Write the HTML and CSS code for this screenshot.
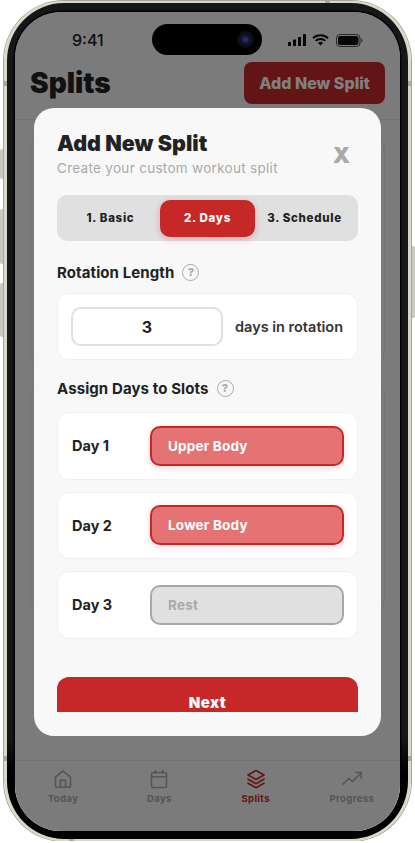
FILE: index.html
```html
<!DOCTYPE html>
<html lang="en">
<head>
<meta charset="UTF-8">
<meta name="viewport" content="width=device-width, initial-scale=1.0">
<title>Add New Split</title>
<link rel="stylesheet" href="styles.css">
</head>
<body>
  <div class="device">
    <span class="side-btn btn-mute"></span>
    <span class="side-btn btn-up"></span>
    <span class="side-btn btn-down"></span>
    <span class="side-btn btn-power"></span>
    <span class="band band-top"></span>
    <span class="band band-bottom"></span>
    <span class="band band-left-a"></span>
    <span class="band band-left-b"></span>
    <span class="band band-right-a"></span>
    <span class="band band-right-b"></span>

    <div class="screen">
      <div class="status-bar">
        <span class="clock">9:41</span>
        <div class="status-icons">
          <svg width="18" height="12" viewBox="0 0 18 12" fill="#0c0c0c">
            <rect x="0" y="8" width="3" height="4" rx="0.6"/>
            <rect x="5" y="5.5" width="3" height="6.5" rx="0.6"/>
            <rect x="10" y="3" width="3" height="9" rx="0.6"/>
            <rect x="15" y="0" width="3" height="12" rx="0.6"/>
          </svg>
          <svg width="17" height="12" viewBox="0 0 17 12" fill="none" stroke="#0c0c0c" stroke-width="2">
            <path d="M1 4.2a10.8 10.8 0 0 1 15 0"/>
            <path d="M3.6 6.9a7 7 0 0 1 9.8 0"/>
            <path d="M8.5 11.6l-2.5-2.6a3.5 3.5 0 0 1 5 0z" fill="#0c0c0c" stroke="none"/>
          </svg>
          <svg class="battery" width="27" height="13" viewBox="0 0 27 13" fill="none">
            <rect x="0.5" y="0.5" width="23.5" height="12" rx="3.5" stroke="#4a4a4a"/>
            <rect x="2" y="2" width="20.5" height="9" rx="2.2" fill="#0c0c0c"/>
            <path d="M25.3 4.6c.8.3 1.2 1 1.2 1.9s-.4 1.6-1.2 1.9z" fill="#4a4a4a"/>
          </svg>
        </div>
      </div>

      <header class="page-header">
        <h1>Splits</h1>
        <button class="add-btn">Add New Split</button>
      </header>

      <main class="page-body">
        <div class="bg-card"></div>
        <div class="bg-card"></div>
      </main>

      <nav class="tab-bar">
        <div class="tab">
          <svg width="20" height="20" viewBox="0 0 20 20" fill="none" stroke="currentColor" stroke-width="1.6" stroke-linejoin="round">
            <path d="M2.5 8.2 10 1.8l7.5 6.4v8.3a1.8 1.8 0 0 1-1.8 1.8H4.3a1.8 1.8 0 0 1-1.8-1.8z"/>
            <path d="M7.4 18.2v-7h5.2v7"/>
          </svg>
          <span>Today</span>
        </div>
        <div class="tab">
          <svg width="20" height="20" viewBox="0 0 20 20" fill="none" stroke="currentColor" stroke-width="1.6">
            <rect x="2.5" y="3.5" width="15" height="15" rx="1.6"/>
            <path d="M2.5 7.8h15M6.5 1v4M13.5 1v4"/>
          </svg>
          <span>Days</span>
        </div>
        <div class="tab tab-active">
          <svg width="20" height="20" viewBox="0 0 20 20" fill="none" stroke="currentColor" stroke-width="1.6" stroke-linejoin="round" stroke-linecap="round">
            <path d="M10 1.5 18 6l-8 4.5L2 6z"/>
            <path d="M2 10.2l8 4.5 8-4.5"/>
            <path d="M2 14.2l8 4.5 8-4.5"/>
          </svg>
          <span>Splits</span>
        </div>
        <div class="tab">
          <svg width="20" height="20" viewBox="0 0 20 20" fill="none" stroke="currentColor" stroke-width="1.6">
            <path d="M0.5 15.5 7 9.5l3.5 3L19 4"/>
            <path d="M13 3.5h6.3v6.3"/>
          </svg>
          <span>Progress</span>
        </div>
      </nav>

      <div class="overlay"></div>

      <div class="island"><span class="camera"></span></div>

      <section class="modal">
        <div class="modal-scroll">
          <div class="modal-head">
            <div>
              <h2>Add New Split</h2>
              <p>Create your custom workout split</p>
            </div>
            <span class="close-x">X</span>
          </div>

          <div class="steps">
            <div class="step">1. Basic</div>
            <div class="step step-active">2. Days</div>
            <div class="step">3. Schedule</div>
          </div>

          <div class="field-label">Rotation Length <span class="help">?</span></div>
          <div class="card rotation-card">
            <div class="number-input">3</div>
            <span class="rotation-text">days in rotation</span>
          </div>

          <div class="field-label assign-label">Assign Days to Slots <span class="help">?</span></div>
          <div class="slots">
            <div class="card slot">
              <span class="slot-name">Day 1</span>
              <div class="picker picker-on">Upper Body</div>
            </div>
            <div class="card slot">
              <span class="slot-name">Day 2</span>
              <div class="picker picker-on">Lower Body</div>
            </div>
            <div class="card slot">
              <span class="slot-name">Day 3</span>
              <div class="picker picker-rest">Rest</div>
            </div>
          </div>

          <button class="next-btn">Next</button>
        </div>
      </section>
    </div>
  </div>
</body>
</html>
```

FILE: styles.css
```css
* {
  box-sizing: border-box;
}

body {
  margin: 0;
  background: #fff;
  font-family: Inter, "Liberation Sans", sans-serif;
  color: #222;
  overflow: hidden;
}

.device {
  position: relative;
  width: 407px;
  height: 840px;
  margin: 1px 0 0 4px;
  padding: 9px 8px 8px;
  border: solid #dad8ca;
  border-width: 2px 3px;
  border-radius: 60px;
  background: linear-gradient(#141818 0 88%, #000 92%);
  box-shadow: 0 0 0 1px #a8a694;
}

.side-btn {
  position: absolute;
  width: 3px;
  background: #c9c8c1;
}

.btn-mute {
  left: -7px;
  top: 146px;
  height: 30px;
  border-radius: 2px 0 0 2px;
}

.btn-up {
  left: -7px;
  top: 206px;
  height: 55px;
  border-radius: 2px 0 0 2px;
}

.btn-down {
  left: -7px;
  top: 280px;
  height: 54px;
  border-radius: 2px 0 0 2px;
}

.btn-power {
  right: -7px;
  top: 243px;
  height: 72px;
  border-radius: 0 2px 2px 0;
}

.band {
  position: absolute;
  background: #a9a795;
}

.band-top {
  top: -3px;
  left: 318px;
  width: 5px;
  height: 3px;
}

.band-bottom {
  bottom: -3px;
  left: 62px;
  width: 5px;
  height: 3px;
}

.band-left-a,
.band-left-b {
  left: -4px;
  width: 4px;
  height: 5px;
}

.band-right-a,
.band-right-b {
  right: -4px;
  width: 4px;
  height: 5px;
}

.band-left-a,
.band-right-a {
  top: 78px;
}

.band-left-b,
.band-right-b {
  top: 753px;
}

.screen {
  position: relative;
  display: flex;
  flex-direction: column;
  height: 819px;
  border-radius: 46px;
  background: #f7f7f7;
  box-shadow: 0 0 0 1.5px #000;
  overflow: hidden;
}

.status-bar {
  display: flex;
  justify-content: space-between;
  align-items: center;
  height: 42px;
  padding: 14px 37px 0 57px;
}

.clock {
  font-size: 16px;
  font-weight: 500;
  color: #1c1c1c;
}

.status-icons {
  display: flex;
  align-items: center;
  gap: 6px;
}

.battery {
  margin-left: 1px;
}

.page-header {
  display: flex;
  justify-content: space-between;
  align-items: flex-start;
  height: 66px;
  padding: 8px 15px 0;
  border-bottom: 1px solid #e6e6e6;
}

.page-header h1 {
  margin: 0;
  font-size: 28px;
  font-weight: 900;
  line-height: 42px;
  color: #222;
}

.add-btn {
  width: 141px;
  height: 42px;
  border: none;
  border-radius: 8px;
  background: #c62828;
  color: #fff;
  font-family: inherit;
  font-size: 16px;
  font-weight: 800;
}

.page-body {
  flex: 1;
  display: flex;
  flex-direction: column;
  gap: 12px;
  padding: 13px 15px;
}

.bg-card {
  height: 235px;
  border: 1px solid #e6e6e6;
  border-radius: 16px;
  background: #f7f7f7;
}

.tab-bar {
  display: flex;
  height: 71px;
  padding-top: 8px;
  border-top: 1px solid #e6e6e6;
  background: #f7f7f7;
}

.tab {
  flex: 1;
  display: flex;
  flex-direction: column;
  align-items: center;
  gap: 4px;
  color: #aaa;
  font-size: 9.5px;
  font-weight: 700;
  letter-spacing: 0.4px;
}

.tab-active {
  color: #c62828;
}

.overlay {
  position: absolute;
  inset: 0;
  background: rgba(0, 0, 0, 0.5);
}

.island {
  position: absolute;
  top: 12px;
  left: 137px;
  width: 110px;
  height: 31px;
  border-radius: 16px;
  background: #000;
}

.camera {
  position: absolute;
  top: 7px;
  right: 8px;
  width: 17px;
  height: 17px;
  border-radius: 50%;
  background: radial-gradient(circle, #2a2a6a 0 12%, #12122a 35%, #0b0b14 70%);
}

.modal {
  position: absolute;
  top: 96px;
  left: 19px;
  width: 347px;
  height: 628px;
  padding: 23px 23px 24px;
  border-radius: 20px;
  background: #f8f8f8;
}

.modal-scroll {
  height: 100%;
  overflow: hidden;
}

.modal-head {
  display: flex;
  justify-content: space-between;
  align-items: center;
}

.modal-head h2 {
  margin: 0;
  font-size: 21.5px;
  font-weight: 900;
  line-height: 25px;
  color: #222;
}

.modal-head p {
  margin: 2px 0 0;
  font-size: 13.5px;
  line-height: 20px;
  letter-spacing: 0.3px;
  color: #aaa;
}

.close-x {
  margin-right: 8px;
  font-size: 22px;
  font-weight: 900;
  color: #aaa;
}

.steps {
  display: flex;
  align-items: center;
  height: 46px;
  margin-top: 17px;
  padding: 4px;
  border-radius: 10px;
  background: #e0e0e0;
}

.step {
  flex: 1;
  display: flex;
  justify-content: center;
  align-items: center;
  height: 37px;
  border-radius: 10px;
  font-size: 11.5px;
  font-weight: 800;
  letter-spacing: 0.7px;
  white-space: nowrap;
  color: #222;
}

.step-active {
  flex: 0 0 95px;
  background: #c62828;
  color: #fff;
  box-shadow: 0 2px 6px rgba(198, 40, 40, 0.3);
}

.field-label {
  display: flex;
  align-items: center;
  gap: 8px;
  margin-top: 21px;
  height: 20px;
  font-size: 15px;
  font-weight: 700;
  letter-spacing: 0.1px;
  color: #222;
}

.assign-label {
  margin-top: 18px;
}

.help {
  display: flex;
  justify-content: center;
  align-items: center;
  width: 17px;
  height: 17px;
  border: 1.5px solid #aaa;
  border-radius: 50%;
  font-size: 11px;
  font-weight: 800;
  color: #aaa;
}

.card {
  display: flex;
  align-items: center;
  border: 1px solid #f0f0f0;
  border-radius: 12px;
  background: #fff;
}

.rotation-card {
  justify-content: space-between;
  height: 67px;
  margin-top: 11px;
  padding: 0 14px 0 13px;
}

.number-input {
  display: flex;
  justify-content: center;
  align-items: center;
  width: 152px;
  height: 39px;
  border: 2px solid #e0e0e0;
  border-radius: 10px;
  font-size: 16px;
  font-weight: 700;
  color: #222;
}

.rotation-text {
  font-size: 14.5px;
  font-weight: 600;
  color: #333;
}

.slots {
  display: flex;
  flex-direction: column;
  gap: 12px;
  margin-top: 14px;
}

.slot {
  justify-content: space-between;
  height: 67.5px;
  padding: 0 13px 0 14px;
}

.slot-name {
  font-size: 14.5px;
  font-weight: 700;
  color: #222;
}

.picker {
  display: flex;
  align-items: center;
  width: 194px;
  height: 40px;
  padding-left: 16px;
  border: 2px solid;
  border-radius: 10px;
  font-size: 13.5px;
  font-weight: 700;
  letter-spacing: 0.2px;
}

.picker-on {
  border-color: #c62828;
  background: #e57373;
  color: #fff;
  box-shadow: 0 2px 6px rgba(198, 40, 40, 0.2);
}

.picker-rest {
  border-color: #a8a8a8;
  background: #e0e0e0;
  color: #aaa;
}

.next-btn {
  display: block;
  width: 100%;
  height: 50px;
  margin-top: 38.5px;
  border: none;
  border-radius: 12px;
  background: #c62828;
  color: #fff;
  font-family: inherit;
  font-size: 15px;
  font-weight: 900;
  letter-spacing: 0.5px;
}
```
